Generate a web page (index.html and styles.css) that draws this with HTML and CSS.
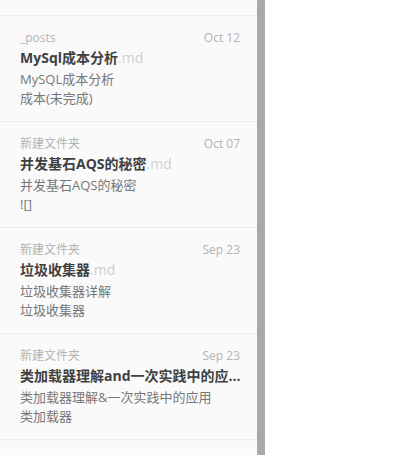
FILE: index.html
```html
<!DOCTYPE html>
<html lang="zh">
<head>
<meta charset="utf-8">
<link rel="stylesheet" href="styles.css">
</head>
<body>
<div class="app">
  <div class="sidebar">
    <div class="item-tail"></div>
    <div class="item">
      <div class="meta"><span class="folder">_posts</span><span class="date">Oct 12</span></div>
      <div class="title">MySql成本分析<span class="ext">.md</span></div>
      <div class="desc">MySQL成本分析<br>成本(未完成)</div>
    </div>
    <div class="item">
      <div class="meta"><span class="folder">新建文件夹</span><span class="date">Oct 07</span></div>
      <div class="title">并发基石AQS的秘密<span class="ext">.md</span></div>
      <div class="desc">并发基石AQS的秘密<br>![]</div>
    </div>
    <div class="item">
      <div class="meta"><span class="folder">新建文件夹</span><span class="date">Sep 23</span></div>
      <div class="title">垃圾收集器<span class="ext">.md</span></div>
      <div class="desc">垃圾收集器详解<br>垃圾收集器</div>
    </div>
    <div class="item">
      <div class="meta"><span class="folder">新建文件夹</span><span class="date">Sep 23</span></div>
      <div class="title">类加载器理解and一次实践中的应用<span class="ext">.md</span></div>
      <div class="desc">类加载器理解&amp;一次实践中的应用<br>类加载器</div>
    </div>
    <div class="item">
      <div class="meta"><span class="folder">新建文件夹</span><span class="date">Sep 20</span></div>
      <div class="title">JVM内存模型<span class="ext">.md</span></div>
      <div class="desc">JVM内存模型<br>内存</div>
    </div>
  </div>
  <div class="scrollbar"></div>
  <div class="content"></div>
</div>
</body>
</html>
```
FILE: styles.css
```css
html, body {
  margin: 0;
  padding: 0;
  background: #ffffff;
}
body {
  font-family: "Open Sans", "Noto Sans CJK SC", sans-serif;
}
.app {
  display: flex;
  height: 455px;
  overflow: hidden;
}
.sidebar {
  width: 257px;
  flex: none;
  background: #fafafa;
  overflow: hidden;
}
.scrollbar {
  width: 8px;
  flex: none;
  background: #a9a9a9;
}
.content {
  flex: 1;
  background: #ffffff;
}
.item-tail {
  height: 15px;
  border-bottom: 1px solid #ececec;
}
.item {
  padding: 14px 17px 13px 20px;
  border-bottom: 1px solid #ececec;
}
.meta {
  display: flex;
  justify-content: space-between;
  font-size: 12px;
  line-height: 16px;
  color: #b3b3b3;
}
.title {
  font-size: 14px;
  line-height: 24px;
  font-weight: 700;
  color: #404040;
  white-space: nowrap;
  overflow: hidden;
  text-overflow: ellipsis;
  margin-right: -6px;
}
.ext {
  font-weight: 400;
  color: #d0d0d0;
}
.desc {
  font-size: 13px;
  line-height: 19px;
  color: #777777;
}
```
